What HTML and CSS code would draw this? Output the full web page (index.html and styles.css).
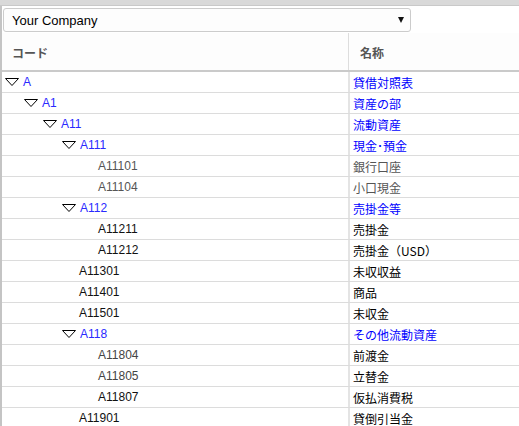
FILE: index.html
```html
<!DOCTYPE html>
<html lang="ja">
<head>
<meta charset="utf-8">
<title>勘定科目</title>
<link rel="stylesheet" href="styles.css">
</head>
<body>
<div class="topbar"></div>
<div class="panel">
  <div class="toolbar">
    <div class="select">
      <span class="select-text">Your Company</span>
      <span class="select-arrow"></span>
    </div>
  </div>
  <div class="grid">
    <div class="head">
      <div class="hcell hcode">コード</div>
      <div class="hcell hname">名称</div>
    </div>
    <div class="row"><div class="code lv0 node"><svg class="tri" viewBox="0 0 14 8"><path d="M0.5 0.5 H13.5 L7 7.5 Z"/></svg>A</div><div class="name node">貸借対照表</div></div>
    <div class="row"><div class="code lv1 node"><svg class="tri" viewBox="0 0 14 8"><path d="M0.5 0.5 H13.5 L7 7.5 Z"/></svg>A1</div><div class="name node">資産の部</div></div>
    <div class="row"><div class="code lv2 node"><svg class="tri" viewBox="0 0 14 8"><path d="M0.5 0.5 H13.5 L7 7.5 Z"/></svg>A11</div><div class="name node">流動資産</div></div>
    <div class="row"><div class="code lv3 node"><svg class="tri" viewBox="0 0 14 8"><path d="M0.5 0.5 H13.5 L7 7.5 Z"/></svg>A111</div><div class="name node">現金･預金</div></div>
    <div class="row muted"><div class="code lv4 leaf">A11101</div><div class="name">銀行口座</div></div>
    <div class="row muted"><div class="code lv4 leaf">A11104</div><div class="name">小口現金</div></div>
    <div class="row"><div class="code lv3 node"><svg class="tri" viewBox="0 0 14 8"><path d="M0.5 0.5 H13.5 L7 7.5 Z"/></svg>A112</div><div class="name node">売掛金等</div></div>
    <div class="row"><div class="code lv4 leaf">A11211</div><div class="name">売掛金</div></div>
    <div class="row"><div class="code lv4 leaf">A11212</div><div class="name">売掛金（USD）</div></div>
    <div class="row"><div class="code lv3 leaf">A11301</div><div class="name">未収収益</div></div>
    <div class="row"><div class="code lv3 leaf">A11401</div><div class="name">商品</div></div>
    <div class="row"><div class="code lv3 leaf">A11501</div><div class="name">未収金</div></div>
    <div class="row"><div class="code lv3 node"><svg class="tri" viewBox="0 0 14 8"><path d="M0.5 0.5 H13.5 L7 7.5 Z"/></svg>A118</div><div class="name node">その他流動資産</div></div>
    <div class="row soft"><div class="code lv4 leaf">A11804</div><div class="name">前渡金</div></div>
    <div class="row soft"><div class="code lv4 leaf">A11805</div><div class="name">立替金</div></div>
    <div class="row"><div class="code lv4 leaf">A11807</div><div class="name">仮払消費税</div></div>
    <div class="row"><div class="code lv3 leaf">A11901</div><div class="name">貸倒引当金</div></div>
  </div>
</div>
</body>
</html>
```

FILE: styles.css
```css
html, body {
  margin: 0;
  padding: 0;
  background: #ffffff;
  font-family: "Liberation Sans", Arial, "Noto Sans CJK JP", sans-serif;
  font-size: 12px;
  color: #111111;
  overflow: hidden;
}

.topbar {
  height: 5px;
  background: #d9d9d9;
  border-bottom: 1px solid #c9c9c9;
}

.panel {
  border-left: 2px solid #c4c4c4;
  background: #ffffff;
}

.toolbar {
  padding: 2px 0 0 1px;
}

.select {
  width: 406px;
  height: 22px;
  border: 1px solid #cccccc;
  border-radius: 3px;
  background: #fdfdfd;
  display: flex;
  align-items: center;
  justify-content: space-between;
  box-sizing: content-box;
}

.select-text {
  padding-left: 8px;
  font-size: 13px;
  color: #000000;
}

.select-arrow {
  width: 0;
  height: 0;
  border-left: 3.5px solid transparent;
  border-right: 3.5px solid transparent;
  border-top: 6px solid #111111;
  margin-right: 6px;
}

.grid {
  display: flex;
  flex-direction: column;
}

.head {
  display: grid;
  grid-template-columns: 346px 1fr;
  height: 37px;
  margin-top: 1px;
  border-bottom: 2px solid #cacaca;
  background: #fdfdfd;
}

.hcell {
  display: flex;
  align-items: center;
  padding-left: 10px;
  padding-top: 2px;
  font-family: "Noto Sans CJK JP", sans-serif;
  font-weight: bold;
  font-size: 12px;
  color: #555555;
}

.hname {
  border-left: 1px solid #dddddd;
  padding-left: 11px;
}

.row {
  display: grid;
  grid-template-columns: 346px 1fr;
  height: 20px;
  border-bottom: 1px solid #dcdcdc;
}

.code {
  display: flex;
  align-items: center;
  font-family: "Liberation Sans", Arial, sans-serif;
  font-size: 12px;
  color: #111111;
}

.name {
  display: flex;
  align-items: center;
  border-left: 2px solid #e4e4e4;
  padding-left: 3px;
  font-family: "Noto Sans CJK JP", sans-serif;
  font-size: 12px;
  color: #000000;
  white-space: nowrap;
}

.code.node { color: #2a2aff; }
.name.node { color: #0000ff; }

.muted .code, .muted .name { color: #555555; }
.soft .code { color: #444444; }

.tri {
  width: 14px;
  height: 8px;
  margin-right: 4px;
  flex: none;
}

.tri path {
  fill: #ffffff;
  stroke: #000000;
  stroke-width: 1;
}

.lv0 { padding-left: 3px; }
.lv1 { padding-left: 22px; }
.lv2 { padding-left: 41px; }
.lv3 { padding-left: 60px; }
.lv4 { padding-left: 79px; }

.leaf.lv3 { padding-left: 77px; }
.leaf.lv4 { padding-left: 96px; }
```
